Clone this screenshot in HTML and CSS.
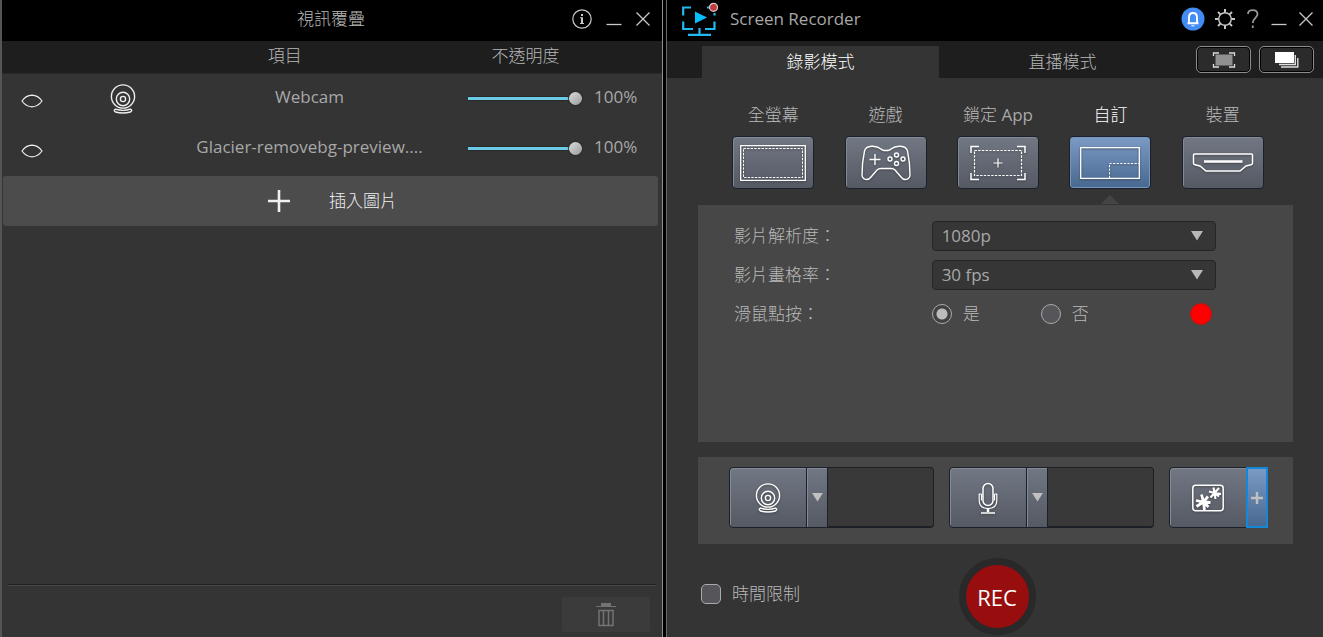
FILE: index.html
```html
<!DOCTYPE html>
<html lang="zh-Hant">
<head>
<meta charset="utf-8">
<title>Screen Recorder</title>
<link rel="stylesheet" href="styles.css">
</head>
<body>
<svg class="defs" aria-hidden="true">
  <symbol id="eye" viewBox="0 0 22 14"><path d="M1 7 Q5 1.400 11 1.200 Q17 1.400 21 7 Q17 12.600 11 12.800 Q5 12.600 1 7Z" fill="none" stroke="currentColor" stroke-width="1.200"/></symbol>
  <symbol id="webcam" viewBox="0 0 26 30"><g fill="none" stroke="currentColor" stroke-width="1.400"><circle cx="13" cy="12.500" r="11.600"/><circle cx="13" cy="15" r="6.700"/><circle cx="13" cy="15" r="2.600"/><path d="M5.500 25.200 Q13 27.600 20.500 25.200 Q23 26.500 20.500 28 Q13 30 5.500 28 Q3 26.500 5.500 25.200Z"/></g></symbol>
  <symbol id="close" viewBox="0 0 14 14"><path d="M.5.5l13 13M13.500.5l-13 13" fill="none" stroke="currentColor" stroke-width="1.300"/></symbol>
  <symbol id="minimize" viewBox="0 0 16 14"><path d="M.5 12.500h15" fill="none" stroke="currentColor" stroke-width="1.300"/></symbol>
  <symbol id="down" viewBox="0 0 12 10"><path d="M0 0h12L6 9.500z" fill="currentColor"/></symbol>
</svg>

<div class="desktop">
  <section class="window overlay-window">
    <header class="titlebar">
      <h1 class="overlay-title">視訊覆疊</h1>
      <div class="window-buttons">
        <button class="icon-button" aria-label="資訊"><svg width="20" height="20" viewBox="0 0 20 20"><circle cx="10" cy="10" r="9.200" fill="none" stroke="currentColor" stroke-width="1.200"/><path d="M9 5h2v2H9zM8 8.300h3v5.700h1v1H8v-1h1V9.300H8z" fill="currentColor"/></svg></button>
        <button class="icon-button" aria-label="最小化"><svg width="16" height="14"><use href="#minimize"/></svg></button>
        <button class="icon-button" aria-label="關閉"><svg width="14" height="14"><use href="#close"/></svg></button>
      </div>
    </header>
    <div class="overlay-head"><span class="head-item">項目</span><span class="head-opacity">不透明度</span></div>
    <ul class="overlay-list">
      <li class="overlay-row">
        <button class="icon-button eye" aria-label="顯示 Webcam"><svg width="22" height="14"><use href="#eye"/></svg></button>
        <svg class="source-icon" width="26" height="30"><use href="#webcam"/></svg>
        <label class="source-name" for="op1">Webcam</label>
        <input class="slider" id="op1" type="range" min="0" max="100" value="100">
        <output class="opacity" for="op1">100%</output>
      </li>
      <li class="overlay-row">
        <button class="icon-button eye" aria-label="顯示 Glacier"><svg width="22" height="14"><use href="#eye"/></svg></button>
        <span></span>
        <label class="source-name" for="op2">Glacier-removebg-preview....</label>
        <input class="slider" id="op2" type="range" min="0" max="100" value="100">
        <output class="opacity" for="op2">100%</output>
      </li>
    </ul>
    <button class="insert"><svg width="24" height="24" viewBox="0 0 24 24"><path d="M12 1v22M1 12h22" stroke="currentColor" stroke-width="2.600"/></svg>插入圖片</button>
    <footer class="overlay-footer">
      <button class="delete" aria-label="刪除"><svg width="20" height="24" viewBox="0 0 20 24"><path d="M5 0h10v3h5v1H0V3h5z" fill="currentColor"/><path d="M3 7.500h14v15H3zM7.500 7v16M12.500 7v16" fill="none" stroke="currentColor" stroke-width="1.500"/></svg></button>
    </footer>
  </section>

  <main class="window recorder">
    <header class="titlebar recorder-bar">
      <svg class="logo" width="38" height="36" viewBox="0 0 38 36"><g fill="none" stroke="#22b8f0" stroke-width="2.200"><path d="M11 6.500H3.200v8M3.200 20.500v7.500H13M27 6.500h6M34.500 12v2.500M34.500 20.500V28H25M19.500 27v6M8 33.800h23"/></g><path d="M15 10.500 27 16.500 15 22.500z" fill="#08bdfc"/><circle cx="33.500" cy="6.300" r="4" fill="#c43b3b" stroke="#d8c8cc" stroke-width="1.200"/></svg>
      <h2 class="recorder-title">Screen Recorder</h2>
      <div class="window-buttons">
        <button class="icon-button bell" aria-label="通知"><svg width="24" height="24" viewBox="0 0 24 24"><circle cx="12" cy="12" r="11.500" fill="#438bf5"/><path d="M8 16V10.500Q8 6 12 6T16 10.500V16M6.500 16.300h11" fill="none" stroke="#fff" stroke-width="1.900"/><path d="M10.500 18.300h3v1h-3z" fill="#fff"/></svg></button>
        <button class="icon-button" aria-label="設定"><svg width="20" height="20" viewBox="0 0 20 20" fill="none" stroke="currentColor"><circle cx="10" cy="10" r="6.300" stroke-width="1.400"/><path d="M10 0v3.500M10 16.500V20M0 10h3.500M16.500 10H20M3 3l2.400 2.400M14.600 14.600 17 17M17 3l-2.400 2.400M5.400 14.600 3 17" stroke-width="2"/></svg></button>
        <button class="icon-button" aria-label="說明"><svg width="12" height="20" viewBox="0 0 12 20"><path d="M1 5Q1 1.200 5.700 1.200T10.500 5.200C10.500 8.800 5.800 9 5.800 14M5.800 16.500v2.500" fill="none" stroke="#999" stroke-width="1.800"/></svg></button>
        <button class="icon-button" aria-label="最小化"><svg width="16" height="14"><use href="#minimize"/></svg></button>
        <button class="icon-button" aria-label="關閉"><svg width="14" height="14"><use href="#close"/></svg></button>
      </div>
    </header>

    <nav class="tabs">
      <button class="tab active">錄影模式</button>
      <button class="tab">直播模式</button>
      <div class="tab-tools">
        <button class="tool" aria-label="擷取"><svg width="24" height="16" viewBox="0 0 24 16"><path d="M3.500 2.500h17v11h-17z" fill="#909090"/><path d="M1.500 4V1H7M17 1h5.500v3M1.500 12v3H7M17 15h5.500v-3" fill="none" stroke="#ddd" stroke-width="1.300"/></svg></button>
        <button class="tool" aria-label="檔案庫"><svg width="24" height="16" viewBox="0 0 24 16"><path d="M0 0h19v11H0z" fill="#fff"/><path d="M20.300 3v9.500H4M22.800 6v9H6" fill="none" stroke="#ddd" stroke-width="1.400"/></svg></button>
      </div>
    </nav>

    <div class="content">
      <div class="modes">
        <div class="mode"><label for="m1">全螢幕</label><button id="m1" class="key"><svg width="66" height="36" viewBox="0 0 66 36" fill="none" stroke="#fff"><path d="M.7.7h64.600v34.600H.7z" stroke-width="1.300"/><path d="M3.500 3.500h59v29h-59z" stroke-dasharray="2.400 1.200"/></svg></button></div>
        <div class="mode"><label for="m2">遊戲</label><button id="m2" class="key"><svg width="50" height="36" viewBox="0 0 50 36" fill="none" stroke="#fff" stroke-width="1.400"><path d="M20 4C21.500 6 28.500 6 30 4 35 0 45 0 46.500 6 48 13 49 24 49 30 48.500 35 43 36 40 32L34 25Q32.500 23.500 30 23.500H20Q17.500 23.500 16 25L10 32C7 36 1.500 35 1 30 1 24 2 13 3.500 6 5 0 15 0 20 4Z"/><path d="M8.500 14.500h11M14 9v11"/><circle cx="35.500" cy="10" r="2"/><circle cx="29" cy="14" r="2"/><circle cx="42" cy="14" r="2"/><circle cx="35.500" cy="18.500" r="2"/></svg></button></div>
        <div class="mode"><label for="m3">鎖定 <span class="latin">App</span></label><button id="m3" class="key"><svg width="56" height="36" viewBox="0 0 56 36" fill="none" stroke="#fff"><path d="M1 8V1.500h8M47 1.500h8V8M1 28v6.500h8M47 34.500h8V28" stroke-width="1.500"/><path d="M4.500 5.500h47v25h-47z" stroke-dasharray="2.400 1.300" stroke-width="1.200"/><path d="M28 13.500v9M23.500 18h9" stroke-width="1.200"/></svg></button></div>
        <div class="mode current"><label for="m4">自訂</label><button id="m4" class="key selected"><svg width="60" height="32" viewBox="0 0 60 32" fill="none" stroke="#fff"><path d="M.7.7h58.600v30.600H.7z" stroke-width="1.300"/><path d="M29.500 31V16.500H59" stroke-dasharray="2.200 1.400"/></svg></button><span class="pointer"></span></div>
        <div class="mode"><label for="m5">裝置</label><button id="m5" class="key"><svg width="62" height="20" viewBox="0 0 62 20" fill="none" stroke="#fff" stroke-width="1.500"><path d="M2.500 1h57q1 0 1 1v8q0 1.500-1.500 1.800L54 13l-6 5H14l-6-5-5-1.200Q1.500 11.500 1.500 10V2q0-1 1-1Z"/><path d="M12 8.500h38.500" stroke-width="2.500"/></svg></button></div>
      </div>

      <form class="settings">
        <label for="resolution">影片解析度：</label>
        <div class="select"><select id="resolution"><option>1080p</option></select><svg width="12" height="10"><use href="#down"/></svg></div>
        <label for="rate">影片畫格率：</label>
        <div class="select"><select id="rate"><option>30 fps</option></select><svg width="12" height="10"><use href="#down"/></svg></div>
        <span>滑鼠點按：</span>
        <div class="clicks">
          <label class="choice"><input type="radio" name="click" checked>是</label>
          <label class="choice"><input type="radio" name="click">否</label>
          <button class="swatch" type="button" aria-label="顏色"></button>
        </div>
      </form>

      <div class="devices">
        <div class="device">
          <button class="device-main" aria-label="網路攝影機"><svg width="26" height="30"><use href="#webcam"/></svg></button>
          <button class="device-more" aria-label="網路攝影機選項"><svg width="11" height="9"><use href="#down"/></svg></button>
          <div class="preview"></div>
        </div>
        <div class="device">
          <button class="device-main" aria-label="麥克風"><svg width="20" height="32" viewBox="0 0 20 32" fill="none" stroke="#fff"><rect x="5" y="1.500" width="10" height="22" rx="5" stroke-width="1.500"/><path d="M3.500 12H1.200v6.500Q1.200 26.500 10 26.500T18.800 18.500V12H16.500M3.500 12v6.500M16.500 12v6.500" stroke-width="1.200"/><path d="M10 26v4" stroke-width="2.500"/><path d="M3 31h14" stroke-width="1.500"/></svg></button>
          <button class="device-more" aria-label="麥克風選項"><svg width="11" height="9"><use href="#down"/></svg></button>
          <div class="preview"></div>
        </div>
        <div class="device">
          <button class="device-main" aria-label="特效"><svg width="32" height="28" viewBox="0 0 32 28" fill="none" stroke="#fff"><rect x=".8" y="1.200" width="30.400" height="25.600" rx="3" stroke-width="1.500"/><path d="M9.500 10.500 11.500 18 12.500 26M4 16.500 11.500 18 18.500 18.500M16 12.500 11.500 18 4.500 22.500M11.500 18 16.500 23" stroke-width="2.800"/><path d="M21.500 3.500 22.500 9 23.500 15M17 7.500 22.500 9 29 10M27 4 22.500 9 18.500 13.500M22.500 9 27 12.500" stroke-width="2.200"/></svg></button>
          <button class="device-more add" aria-label="新增特效"><svg width="12" height="12" viewBox="0 0 12 12"><path d="M6 0v12M0 6h12" stroke="currentColor" stroke-width="2.400"/></svg></button>
        </div>
      </div>

      <div class="record-bar">
        <label class="limit"><input type="checkbox">時間限制</label>
        <button class="record">REC</button>
      </div>
    </div>
  </main>
</div>
</body>
</html>
```
FILE: styles.css
```css
* { box-sizing: border-box; }

body {
  margin: 0;
  background: #000;
  color: #b8b8b8;
  font: 300 17px/24px "Open Sans", "Noto Sans CJK TC", sans-serif;
}

button, select, input { font: inherit; color: inherit; margin: 0; }
button { padding: 0; border: 0; background: none; }
svg { display: block; flex: none; }
h1, h2 { margin: 0; font: inherit; }
.defs { display: none; }

/* Latin runs need the regular weight to balance the light CJK strokes */
.latin, .source-name, .opacity, .recorder-title, select { color: #a8a8a8; font-weight: 400; }

.desktop {
  display: grid;
  grid-template-columns: 663fr 657fr;
  gap: 3px;
  min-height: 100vh;
}

.window {
  display: flex;
  flex-direction: column;
  min-width: 0;
  background: #343434;
  border-left: 1px solid #6a6a6a;
}
.overlay-window { border-left: 2px solid #555; border-right: 1px solid #909090; }

.titlebar {
  display: flex;
  align-items: center;
  height: 41px;
  padding: 0 12px 4px;
  background: #000;
}
.window-buttons { display: flex; align-items: center; gap: 14px; color: #c8c8c8; }
.icon-button { display: grid; place-items: center; }

/* Overlay window */
.overlay-title { flex: 1; padding-left: 76px; text-align: center; }
.overlay-head {
  display: grid;
  grid-template-columns: 178fr 208fr 272fr;
  height: 33px;
  padding-top: 3px;
  background: #1e1e1e;
  border-bottom: 1px solid #292929;
  text-align: center;
}
.head-item { grid-column: 2; }
.overlay-list { margin: 0; padding: 0; list-style: none; }
.overlay-row {
  display: grid;
  grid-template-columns: 60fr 122fr 251fr 33fr 114fr 12fr 44fr 24fr;
  align-items: center;
  height: 50px;
  padding-bottom: 4px;
}
.eye { padding-top: 8px; color: #eee; }
.source-icon { justify-self: center; margin-top: 4px; color: #eee; }
.source-name { text-align: center; white-space: nowrap; }
.slider {
  grid-column: 5;
  appearance: none;
  width: 100%;
  height: 14px;
  margin-top: 3px;
  background: linear-gradient(#292929, #292929 1px, #6ccce8 1px, #6ccce8 4px, #292929 4px) center / 100% 5px no-repeat;
}
.slider::-webkit-slider-thumb {
  appearance: none;
  width: 13px;
  height: 13px;
  border-radius: 50%;
  background: linear-gradient(135deg, #ddd, #999);
  box-shadow: 0 0 1px 1px #2b2b2b;
}
.opacity { grid-column: 7; overflow: hidden; white-space: nowrap; }
.insert {
  display: flex;
  align-items: center;
  gap: 38px;
  height: 50px;
  margin: 2px 4px 0 1px;
  padding-left: 40%;
  border-radius: 3px;
  background: #4c4c4c;
  color: #f0f0f0;
}
.overlay-footer {
  display: flex;
  justify-content: flex-end;
  margin: auto 6px 0;
  padding: 12px 6px 5px;
  border-top: 1px solid #202020;
  box-shadow: inset 0 1px #484848;
}
.delete {
  display: grid;
  place-items: center;
  width: 88px;
  height: 35px;
  border-radius: 3px;
  background: #3b3b3b;
  color: #737373;
}

/* Recorder window */
.recorder-bar { padding: 0 10px 4px 13px; }
.recorder-title { flex: 1; padding-left: 12px; }
.recorder-bar .window-buttons { gap: 12px; }
.recorder-bar .bell { margin-right: -2px; }
.tabs {
  display: grid;
  grid-template-columns: 237fr 247fr 137fr;
  height: 37px;
  padding: 5px 0 0 35px;
  background: #1e1e1e;
}
.tab.active { background: #343434; color: #fff; }
.tab-tools { display: flex; gap: 8px; justify-content: flex-end; padding-right: 9px; }
.tool {
  display: grid;
  place-items: center;
  width: 55px;
  height: 27px;
  border: 1px solid #8c8c8c;
  border-radius: 5px;
  background: #2b2b2b;
  box-shadow: inset 0 0 0 1px #000;
}

.content { display: flex; flex: 1; flex-direction: column; padding: 25px 30px 0 31px; }
.modes { display: grid; grid-template-columns: repeat(5, 1fr); padding: 0 14px 0 19px; }
.mode {
  display: flex;
  position: relative;
  flex-direction: column;
  align-items: center;
  gap: 9px;
  padding-bottom: 16px;
}
.current { color: #fff; }
.key {
  display: grid;
  place-items: center;
  width: 82px;
  height: 53px;
  border: 1px solid #1a212b;
  border-radius: 4px;
  background: linear-gradient(#727883, #545964);
  box-shadow: inset 1px 1px #858b95;
}
.key svg, .device-main svg { filter: drop-shadow(0 1px 1px #333a); }
.selected { background: linear-gradient(#7b9bc5, #486890); box-shadow: inset 0 0 0 1px #7896bb; }
.pointer {
  position: absolute;
  bottom: 1px;
  border: 9px solid transparent;
  border-top: 0;
  border-bottom-color: #454545;
}

.settings {
  display: grid;
  grid-template-columns: 198fr 285fr 77fr;
  grid-auto-rows: 30px;
  align-items: center;
  align-content: start;
  row-gap: 9px;
  height: 237px;
  padding: 16px 0 0 36px;
  background: #474747;
}
.settings > :nth-child(odd) { grid-column: 1; }
.select { display: grid; align-items: center; height: 30px; }
.select > * { grid-area: 1 / 1; }
.select svg { justify-self: end; margin-right: 13px; pointer-events: none; }
select {
  appearance: none;
  width: 100%;
  height: 30px;
  padding: 0 9px;
  border: 1px solid #252525;
  border-radius: 4px;
  background: #363636;
}
.clicks { display: flex; align-items: center; }
.choice, .limit { display: flex; align-items: center; gap: 11px; }
.choice { width: 109px; }
.choice input, .limit input {
  appearance: none;
  flex: none;
  width: 20px;
  height: 20px;
  border: 1px solid #aaa;
  border-radius: 50%;
  background: #55555a;
}
.choice input:checked { background: radial-gradient(circle, #bcbcbc 5px, #414141 6px); }
.swatch {
  width: 22px;
  height: 22px;
  margin: 0 4px 0 auto;
  border: 1px solid #b91414;
  border-radius: 50%;
  background: #f00;
}

.devices {
  display: flex;
  gap: 15px;
  margin-top: 15px;
  padding: 10px 25px 16px 31px;
  background: #474747;
}
.device { display: flex; flex: 0 1 auto; height: 61px; color: #c0c0c0; }
.device-main, .device-more {
  display: grid;
  place-items: center;
  border: 1px solid #1a212b;
  background: linear-gradient(#727883, #545964);
  box-shadow: inset 1px 1px #858b95;
}
.device-main { width: 78px; border-radius: 4px 0 0 4px; color: #fff; }
.device-more { width: 22px; margin-left: -1px; }
.add { border-color: #1487d8; background: linear-gradient(#7b9bc5, #486890); box-shadow: inset 0 0 0 1px #1487d8; }
.preview {
  width: 106px;
  border: 1px solid #1c2026;
  border-left: 0;
  border-bottom-width: 2px;
  border-radius: 0 4px 4px 0;
  background: #393939;
}

.record-bar { display: grid; grid-template-columns: 1fr auto 1fr; align-items: center; padding: 14px 0 0 3px; }
.limit { padding-bottom: 6px; }
.limit input { border-radius: 5px; }
.record {
  width: 77px;
  height: 77px;
  border: 7px solid #292929;
  border-radius: 50%;
  background: #980d0e;
  color: #fff;
  font-size: 22px;
  font-weight: 400;
}
```
